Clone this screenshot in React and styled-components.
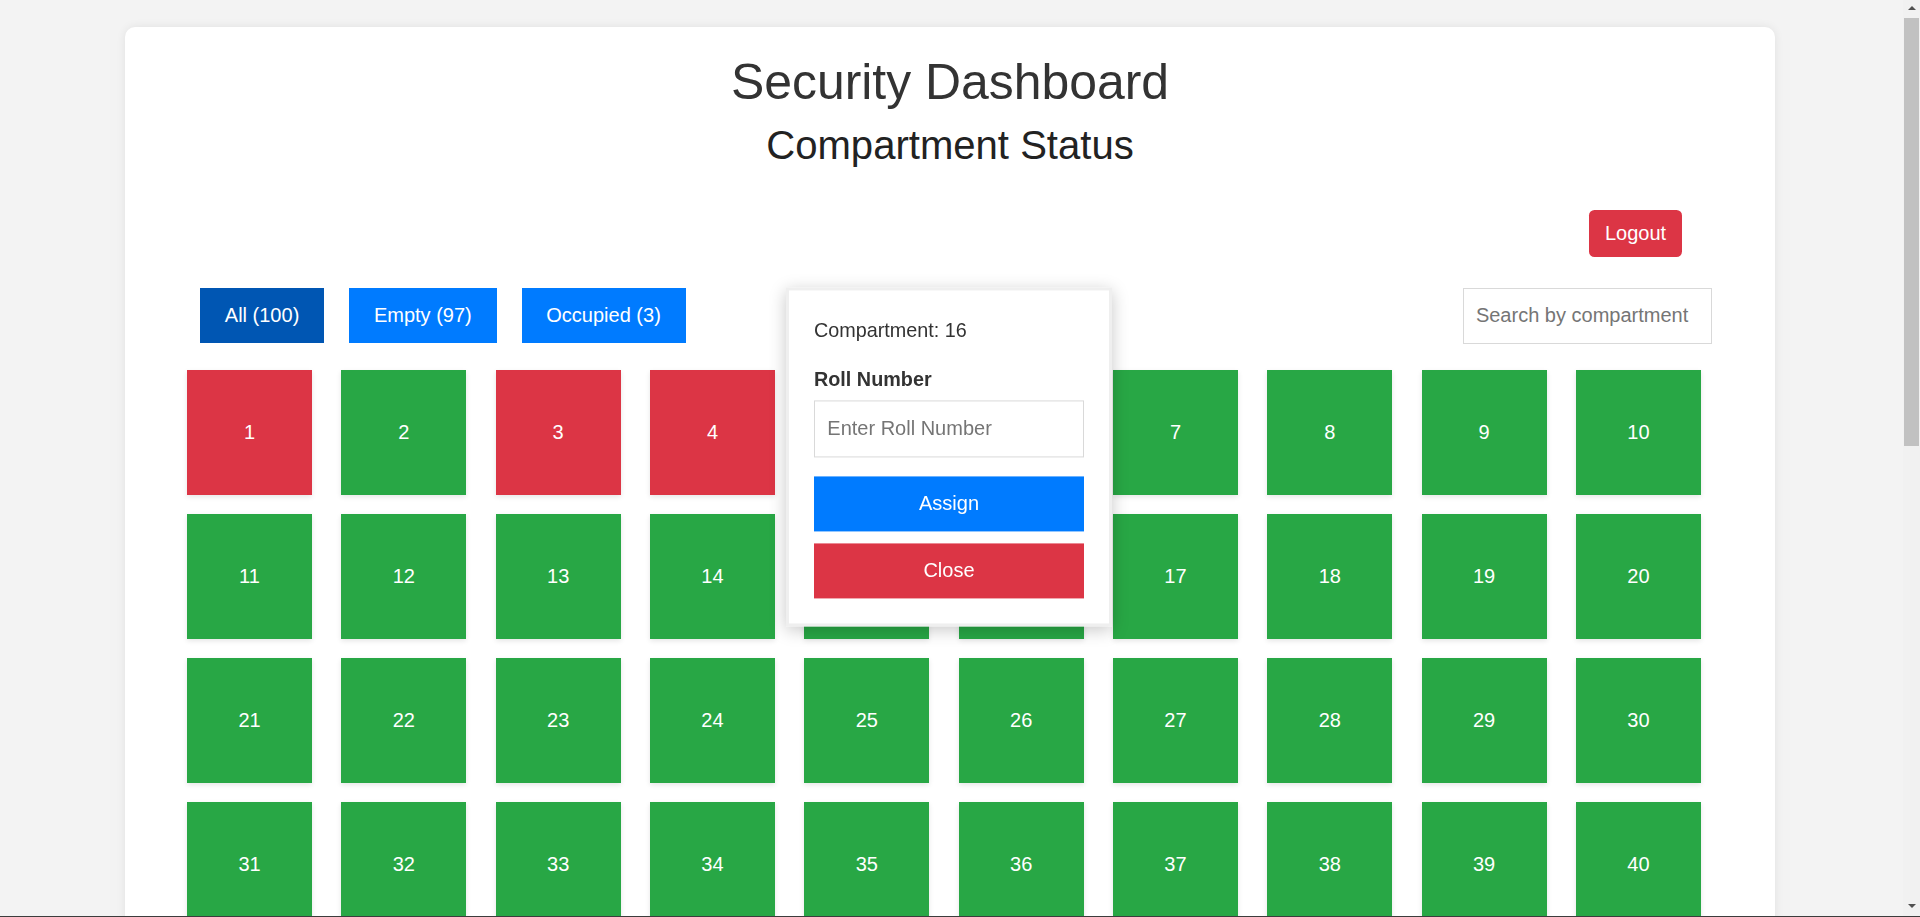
import React, { useState } from 'react';
import styled, { createGlobalStyle } from 'styled-components';

const GlobalStyle = createGlobalStyle`
  html, body {
    margin: 0;
    padding: 0;
    background: #f3f3f3;
    font-family: "Liberation Sans", Arial, sans-serif;
  }
  * {
    box-sizing: border-box;
  }
`;

// the page is laid out for a 1903px viewport plus a 17px classic scrollbar
const Page = styled.div`
  padding: 27px 145px 41px 125px;
`;

const Card = styled.div`
  background: #fff;
  border-radius: 10px;
  box-shadow: 0 0 10px rgba(0, 0, 0, 0.08);
  padding: 26.7px 0 60px;
`;

const Title = styled.h1`
  margin: 0;
  font-size: 49.9px;
  line-height: 57px;
  font-weight: 400;
  color: #333;
  text-align: center;
`;

const Subtitle = styled.h2`
  margin: 12.5px 0 0;
  font-size: 40.1px;
  line-height: 45.5px;
  font-weight: 400;
  color: #222;
  text-align: center;
`;

const LogoutRow = styled.div`
  display: flex;
  justify-content: flex-end;
  margin-top: 41.6px;
  padding-right: 93px;
`;

const LogoutButton = styled.button`
  height: 46.7px;
  padding: 0 15.9px;
  border: none;
  border-radius: 5.5px;
  background: #dc3545;
  color: #fff;
  font-family: inherit;
  font-size: 20px;
  cursor: pointer;
`;

const FilterBar = styled.div`
  display: flex;
  justify-content: space-between;
  align-items: center;
  margin-top: 30.6px;
  padding: 0 63px 0 75px;
`;

const FilterGroup = styled.div`
  display: flex;
  gap: 25px;
`;

const FilterButton = styled.button`
  height: 54.7px;
  padding: 0 24.8px;
  border: none;
  background: ${({ active }) => (active ? '#0056b3' : '#007bff')};
  color: #fff;
  font-family: inherit;
  font-size: 20px;
  cursor: pointer;
`;

const TextInput = styled.input`
  display: block;
  width: ${({ width }) => width || '100%'};
  height: 56.4px;
  padding: 0 12.3px;
  border: 1px solid #d9d9d9;
  background: #fff;
  font-family: inherit;
  font-size: 20px;
  color: #333;
  outline: none;

  &::placeholder {
    color: #757575;
  }
`;

const Grid = styled.div`
  display: grid;
  grid-template-columns: repeat(10, 125px);
  justify-content: space-between;
  row-gap: 19px;
  margin-top: 25.7px;
  padding: 0 74px 0 62px;
`;

const Tile = styled.div`
  height: 125px;
  display: flex;
  align-items: center;
  justify-content: center;
  background: ${({ occupied }) => (occupied ? '#dc3545' : '#28a745')};
  color: #fff;
  font-size: 20px;
  box-shadow: 0 2px 5px rgba(0, 0, 0, 0.1);
  cursor: pointer;
`;

const Popup = styled.div`
  position: fixed;
  top: calc(50% - 2px);
  left: calc(50% - 11px);
  transform: translate(-50%, -50%);
  width: 326px;
  padding: 29px 25px 25px;
  background: #fff;
  border: 3px solid #efefef;
  box-shadow: 0 4px 16px rgba(0, 0, 0, 0.22);
  color: #333;
  font-size: 19.8px;
  z-index: 5;
`;

const PopupText = styled.p`
  margin: 0;
  line-height: 22.8px;
`;

const FieldLabel = styled.label`
  display: block;
  margin: 27.2px 0 9px;
  line-height: 22.8px;
  font-weight: 700;
`;

const PopupButton = styled.button`
  display: block;
  width: 100%;
  height: 55px;
  margin-top: ${({ gap }) => gap}px;
  border: none;
  background: ${({ danger }) => (danger ? '#dc3545' : '#007bff')};
  color: #fff;
  font-family: inherit;
  font-size: 20px;
  cursor: pointer;
`;

const ScrollTrack = styled.div`
  position: fixed;
  top: 0;
  right: 0;
  bottom: 0;
  width: 17px;
  background: #f1f1f1;
  display: flex;
  flex-direction: column;
  align-items: center;
  z-index: 10;
`;

const ScrollArrow = styled.div`
  width: 0;
  height: 0;
  margin: ${({ down }) => (down ? 'auto 0 9px' : '6px 0 0')};
  border-left: 4px solid transparent;
  border-right: 4px solid transparent;
  ${({ down }) => (down ? 'border-top' : 'border-bottom')}: 4px solid #505050;
`;

const ScrollThumb = styled.div`
  width: 15px;
  height: 428px;
  margin-top: 8px;
  background: #c1c1c1;
`;

const WindowEdge = styled.div`
  position: fixed;
  left: 0;
  right: 0;
  bottom: 0;
  height: 1px;
  background: #3c3c3c;
  z-index: 11;
`;

const occupiedSet = new Set([1, 3, 4]);
const compartments = Array.from({ length: 100 }, (_, i) => ({
  id: i + 1,
  occupied: occupiedSet.has(i + 1),
}));

export default function App() {
  const [filter, setFilter] = useState('all');
  const [search, setSearch] = useState('');
  const [selected, setSelected] = useState(16);
  const [roll, setRoll] = useState('');

  const occupiedCount = compartments.filter((c) => c.occupied).length;
  const emptyCount = compartments.length - occupiedCount;

  const shown = compartments.filter((c) => {
    if (filter === 'empty' && c.occupied) return false;
    if (filter === 'occupied' && !c.occupied) return false;
    if (search && !String(c.id).includes(search)) return false;
    return true;
  });

  return (
    <Page>
      <GlobalStyle />
      <Card>
        <Title>Security Dashboard</Title>
        <Subtitle>Compartment Status</Subtitle>
        <LogoutRow>
          <LogoutButton>Logout</LogoutButton>
        </LogoutRow>
        <FilterBar>
          <FilterGroup>
            <FilterButton active={filter === 'all'} onClick={() => setFilter('all')}>
              All ({compartments.length})
            </FilterButton>
            <FilterButton active={filter === 'empty'} onClick={() => setFilter('empty')}>
              Empty ({emptyCount})
            </FilterButton>
            <FilterButton active={filter === 'occupied'} onClick={() => setFilter('occupied')}>
              Occupied ({occupiedCount})
            </FilterButton>
          </FilterGroup>
          <TextInput
            width="249.4px"
            placeholder="Search by compartment"
            value={search}
            onChange={(e) => setSearch(e.target.value)}
          />
        </FilterBar>
        <Grid>
          {shown.map((c) => (
            <Tile key={c.id} occupied={c.occupied} onClick={() => setSelected(c.id)}>
              {c.id}
            </Tile>
          ))}
        </Grid>
      </Card>
      {selected && (
        <Popup>
          <PopupText>Compartment: {selected}</PopupText>
          <FieldLabel>Roll Number</FieldLabel>
          <TextInput
            placeholder="Enter Roll Number"
            value={roll}
            onChange={(e) => setRoll(e.target.value)}
          />
          <PopupButton gap={19.4}>Assign</PopupButton>
          <PopupButton gap={11.6} danger onClick={() => setSelected(null)}>
            Close
          </PopupButton>
        </Popup>
      )}
      <ScrollTrack>
        <ScrollArrow />
        <ScrollThumb />
        <ScrollArrow down />
      </ScrollTrack>
      <WindowEdge />
    </Page>
  );
}
